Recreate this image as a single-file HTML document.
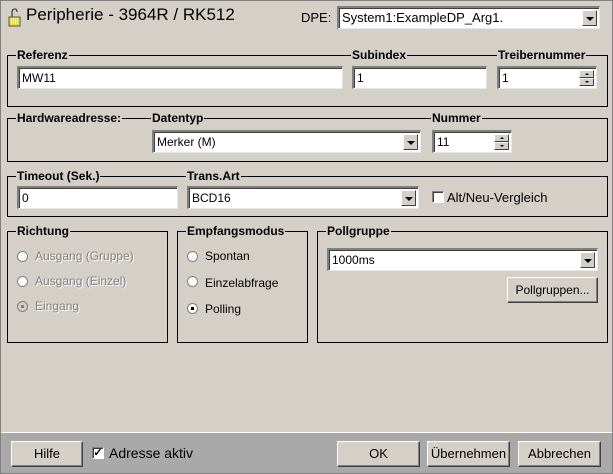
<!DOCTYPE html>
<html><head><style>
*{box-sizing:border-box;margin:0;padding:0}
body{width:613px;height:474px;background:#d4d0c8;font-family:"Liberation Sans",Arial,sans-serif;font-size:12px;color:#000;position:relative;overflow:hidden}
.a{position:absolute}
.grp{position:absolute;border:1px solid #000}
.lbl{position:absolute;background:#d4d0c8;font-weight:bold;font-size:12px;padding:0 1px;line-height:13px}
.in{position:absolute;background:#fff;border-top:2px solid #808080;border-left:2px solid #808080;border-bottom:1px solid #e8e8e8;border-right:1px solid #e8e8e8;box-shadow:inset 1px 1px 0 #404040;padding:3px 0 0 3px;font-size:12px;line-height:14px}
.dd{position:absolute;right:2px;top:2px;width:15px;height:16px;background:#d4d0c8;border:1px solid;border-color:#fff #404040 #404040 #fff}
.dd:after{content:"";position:absolute;left:3px;top:6px;border-left:4px solid transparent;border-right:4px solid transparent;border-top:4px solid #000}
.sp{position:absolute;right:2px;top:2px;width:15px;height:16px}
.sp i{display:block;height:8px;border:1px solid;border-color:#fff #404040 #404040 #fff;background:#d4d0c8;position:relative}
.sp i:after{content:"";position:absolute;left:5px;top:2px;border-left:2px solid transparent;border-right:2px solid transparent}
.sp i.u:after{border-bottom:2px solid #000}
.sp i.d:after{border-top:2px solid #000}
.btn{position:absolute;background:#d4d0c8;border:1px solid;border-color:#fff #404040 #404040 #fff;box-shadow:inset -1px -1px 0 #808080;text-align:center;font-size:13px}
.rad{position:absolute;width:11px;height:11px;border-radius:50%;background:#fff;border:1px solid #808080}
.rl{position:absolute;font-size:12px}
.dis{color:#808080;text-shadow:1px 1px 0 #fff}
.chk{position:absolute;width:12px;height:12px;background:#fff;border:1px solid;border-color:#808080 #fff #fff #808080;box-shadow:inset 1px 1px 0 #404040}
</style></head><body>
<div class="a" style="left:0;top:0;width:613px;height:474px;border:1px solid #808080;z-index:9;pointer-events:none"></div>
<svg class="a" style="left:7px;top:5px" width="14" height="24"><path d="M5 12 V7 Q5 4 8 4 Q10 4 10 7" stroke="#444" stroke-width="1.3" fill="none"/><rect x="2" y="12" width="11" height="9" fill="#e8e030" stroke="#555"/><path d="M4 14h7M4 16h7M4 18h7" stroke="#fff" stroke-dasharray="1 1"/></svg>
<div class="a" style="left:26px;top:5px;font-size:17px">Peripherie - 3964R / RK512</div>
<div class="a" style="left:301px;top:10px;font-size:13px">DPE:</div>
<div class="in" style="left:337px;top:6px;width:263px;height:23px;font-size:13px">System1:ExampleDP_Arg1.<div class="dd"></div></div>

<div class="grp" style="left:7px;top:55px;width:601px;height:52px"></div>
<div class="lbl" style="left:16px;top:49px">Referenz</div>
<div class="lbl" style="left:351px;top:49px">Subindex</div>
<div class="lbl" style="left:497px;top:49px">Treibernummer</div>
<div class="in" style="left:17px;top:66px;width:326px;height:23px">MW11</div>
<div class="in" style="left:352px;top:66px;width:135px;height:23px">1</div>
<div class="in" style="left:497px;top:66px;width:100px;height:23px">1<div class="sp"><i class="u"></i><i class="d"></i></div></div>

<div class="grp" style="left:7px;top:118px;width:601px;height:44px"></div>
<div class="lbl" style="left:16px;top:112px">Hardwareadresse:</div>
<div class="lbl" style="left:151px;top:112px">Datentyp</div>
<div class="lbl" style="left:431px;top:112px">Nummer</div>
<div class="in" style="left:152px;top:130px;width:269px;height:23px">Merker (M)<div class="dd"></div></div>
<div class="in" style="left:432px;top:130px;width:80px;height:23px">11<div class="sp"><i class="u"></i><i class="d"></i></div></div>

<div class="grp" style="left:7px;top:176px;width:601px;height:41px"></div>
<div class="lbl" style="left:16px;top:170px">Timeout (Sek.)</div>
<div class="lbl" style="left:186px;top:170px">Trans.Art</div>
<div class="in" style="left:17px;top:186px;width:161px;height:23px">0</div>
<div class="in" style="left:187px;top:186px;width:232px;height:23px">BCD16<div class="dd"></div></div>
<div class="chk" style="left:432px;top:191px"></div>
<div class="rl" style="left:447px;top:190px;font-size:13px">Alt/Neu-Vergleich</div>

<div class="grp" style="left:7px;top:231px;width:161px;height:112px"></div>
<div class="lbl" style="left:16px;top:225px">Richtung</div>
<div class="rad" style="left:17px;top:251px"></div><div class="rl dis" style="left:35px;top:249px">Ausgang (Gruppe)</div>
<div class="rad" style="left:17px;top:276px"></div><div class="rl dis" style="left:35px;top:274px">Ausgang (Einzel)</div>
<div class="rad" style="left:17px;top:301px;background:#d4d0c8"><div class="a" style="left:3px;top:3px;width:3px;height:3px;background:#808080"></div></div><div class="rl dis" style="left:35px;top:299px">Eingang</div>

<div class="grp" style="left:177px;top:231px;width:131px;height:112px"></div>
<div class="lbl" style="left:186px;top:225px">Empfangsmodus</div>
<div class="rad" style="left:187px;top:251px"></div><div class="rl" style="left:205px;top:249px">Spontan</div>
<div class="rad" style="left:187px;top:276px"></div><div class="rl" style="left:205px;top:276px">Einzelabfrage</div>
<div class="rad" style="left:187px;top:303px"><div class="a" style="left:3px;top:3px;width:3px;height:3px;background:#000"></div></div><div class="rl" style="left:205px;top:302px">Polling</div>

<div class="grp" style="left:317px;top:231px;width:291px;height:112px"></div>
<div class="lbl" style="left:326px;top:225px">Pollgruppe</div>
<div class="in" style="left:327px;top:248px;width:271px;height:23px">1000ms<div class="dd"></div></div>
<div class="btn" style="left:507px;top:277px;width:91px;height:26px;line-height:24px;font-size:12px">Pollgruppen...</div>

<div class="a" style="left:0;top:432px;width:613px;height:42px;background:#a9a9a9;border-top:1px solid #fff"></div>
<div class="btn" style="left:11px;top:441px;width:72px;height:26px;line-height:24px">Hilfe</div>
<div class="chk" style="left:92px;top:447px;font-size:11px;line-height:10px;font-weight:bold;text-align:center">✓</div>
<div class="rl" style="left:109px;top:445px;font-size:14px">Adresse aktiv</div>
<div class="btn" style="left:337px;top:441px;width:83px;height:26px;line-height:24px">OK</div>
<div class="btn" style="left:427px;top:441px;width:83px;height:26px;line-height:24px">Übernehmen</div>
<div class="btn" style="left:518px;top:441px;width:83px;height:26px;line-height:24px">Abbrechen</div>
</body></html>
